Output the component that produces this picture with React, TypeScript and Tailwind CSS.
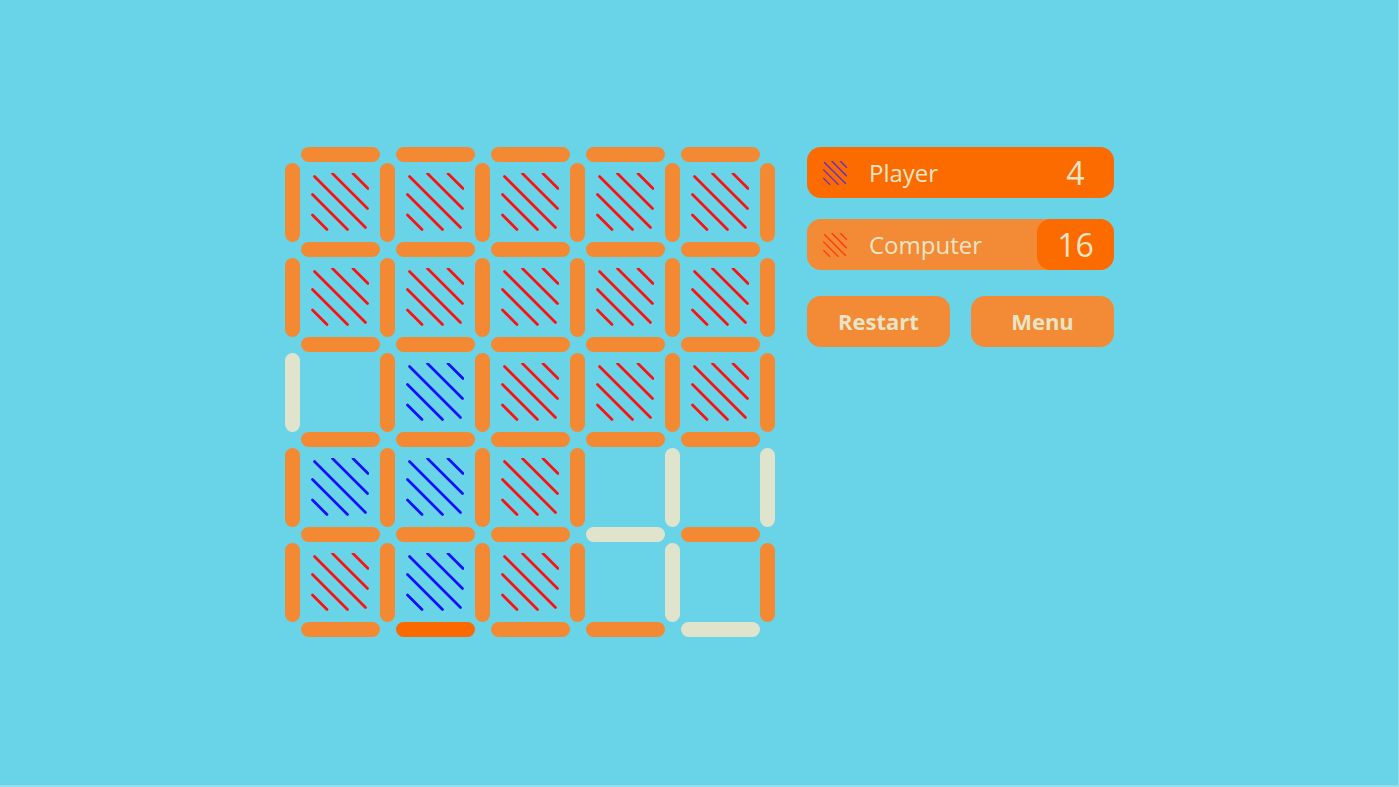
import React from "react";

type B = "o" | "l" | "d";
type C = "r" | "b" | "e";

const H: B[][] = [
  ["o", "o", "o", "o", "o"],
  ["o", "o", "o", "o", "o"],
  ["o", "o", "o", "o", "o"],
  ["o", "o", "o", "o", "o"],
  ["o", "o", "o", "l", "o"],
  ["o", "d", "o", "o", "l"],
];
const V: B[][] = [
  ["o", "o", "o", "o", "o", "o"],
  ["o", "o", "o", "o", "o", "o"],
  ["l", "o", "o", "o", "o", "o"],
  ["o", "o", "o", "o", "l", "l"],
  ["o", "o", "o", "o", "l", "o"],
];
const CELLS: C[][] = [
  ["r", "r", "r", "r", "r"],
  ["r", "r", "r", "r", "r"],
  ["e", "b", "r", "r", "r"],
  ["b", "b", "r", "e", "e"],
  ["r", "b", "r", "e", "e"],
];

const LINES = [
  [53, 11.5, 68, 26.5],
  [32.5, 11.5, 67.5, 46.5],
  [14.5, 14.5, 65.5, 65.5],
  [12.5, 32.5, 47.5, 67.5],
  [12.5, 53, 27, 67.5],
];

function Hatch({ color, size, sw }: { color: string; size: number; sw: number }) {
  return (
    <svg width={size} height={size} viewBox="11 11 58 58">
      {LINES.map((l, i) => (
        <line key={i} x1={l[0]} y1={l[1]} x2={l[2]} y2={l[3]} stroke={color} strokeWidth={sw} strokeLinecap="round" />
      ))}
    </svg>
  );
}

function barClass(b: B) {
  if (b === "l") return "bg-[#e0e4cc]";
  if (b === "d") return "bg-[#fb6a00]";
  return "bg-[#f38a33]";
}

export default function App() {
  const items: React.ReactNode[] = [];
  for (let r = 0; r < 11; r++) {
    for (let c = 0; c < 11; c++) {
      const k = `${r}-${c}`;
      if (r % 2 === 0 && c % 2 === 0) {
        items.push(<div key={k} />);
      } else if (r % 2 === 0) {
        const b = H[r / 2][(c - 1) / 2];
        items.push(
          <div key={k} className="flex items-center justify-center">
            <div className={`w-[79px] h-[15px] rounded-full ${barClass(b)}`} />
          </div>
        );
      } else if (c % 2 === 0) {
        const b = V[(r - 1) / 2][c / 2];
        items.push(
          <div key={k} className="flex items-center justify-center">
            <div className={`w-[15px] h-[79px] rounded-full ${barClass(b)}`} />
          </div>
        );
      } else {
        const cell = CELLS[(r - 1) / 2][(c - 1) / 2];
        items.push(
          <div key={k} className="flex items-center justify-center">
            {cell !== "e" && (
              <Hatch color={cell === "r" ? "#ff1010" : "#1010ff"} size={58} sw={2.7} />
            )}
          </div>
        );
      }
    }
  }

  return (
    <div
      className="w-[1399px] h-[787px] bg-[#69d3e7] border-b-2 border-r border-[#8fe0ef] overflow-hidden"
      style={{ fontFamily: '"Open Sans", "Noto Sans", sans-serif' }}
    >
      <div className="flex items-start pt-[147px] pl-[285px] gap-[32px]">
        <div className="grid grid-cols-[15px_80px_15px_80px_15px_80px_15px_80px_15px_80px_15px] grid-rows-[15px_80px_15px_80px_15px_80px_15px_80px_15px_80px_15px]">
          {items}
        </div>
        <div className="flex flex-col w-[307px]">
          <div className="flex items-center h-[51px] rounded-[14px] bg-[#fb6b00] text-[#ece5c5]">
            <div className="ml-[16px] w-[24px] h-[24px] flex items-center justify-center">
              <Hatch color="#5530d8" size={24} sw={3.2} />
            </div>
            <span className="ml-[22px] text-[24px] leading-none flex-1">Player</span>
            <div className="w-[77px] h-full flex items-center justify-center text-[32px] font-normal leading-none">4</div>
          </div>
          <div className="mt-[21px] flex items-center h-[51px] rounded-[14px] bg-[#f38a35] text-[#ece5c5]">
            <div className="ml-[16px] w-[24px] h-[24px] flex items-center justify-center">
              <Hatch color="#ff3a10" size={24} sw={3.2} />
            </div>
            <span className="ml-[22px] text-[24px] leading-none flex-1">Computer</span>
            <div className="w-[77px] h-full rounded-[14px] bg-[#fb6b00] flex items-center justify-center text-[32px] font-normal leading-none">16</div>
          </div>
          <div className="mt-[26px] flex gap-[21px]">
            <button className="w-[143px] h-[51px] rounded-[14px] bg-[#f38a35] text-[#e8e4c4] text-[22px] font-bold">Restart</button>
            <button className="w-[143px] h-[51px] rounded-[14px] bg-[#f38a35] text-[#e8e4c4] text-[22px] font-bold">Menu</button>
          </div>
        </div>
      </div>
    </div>
  );
}
